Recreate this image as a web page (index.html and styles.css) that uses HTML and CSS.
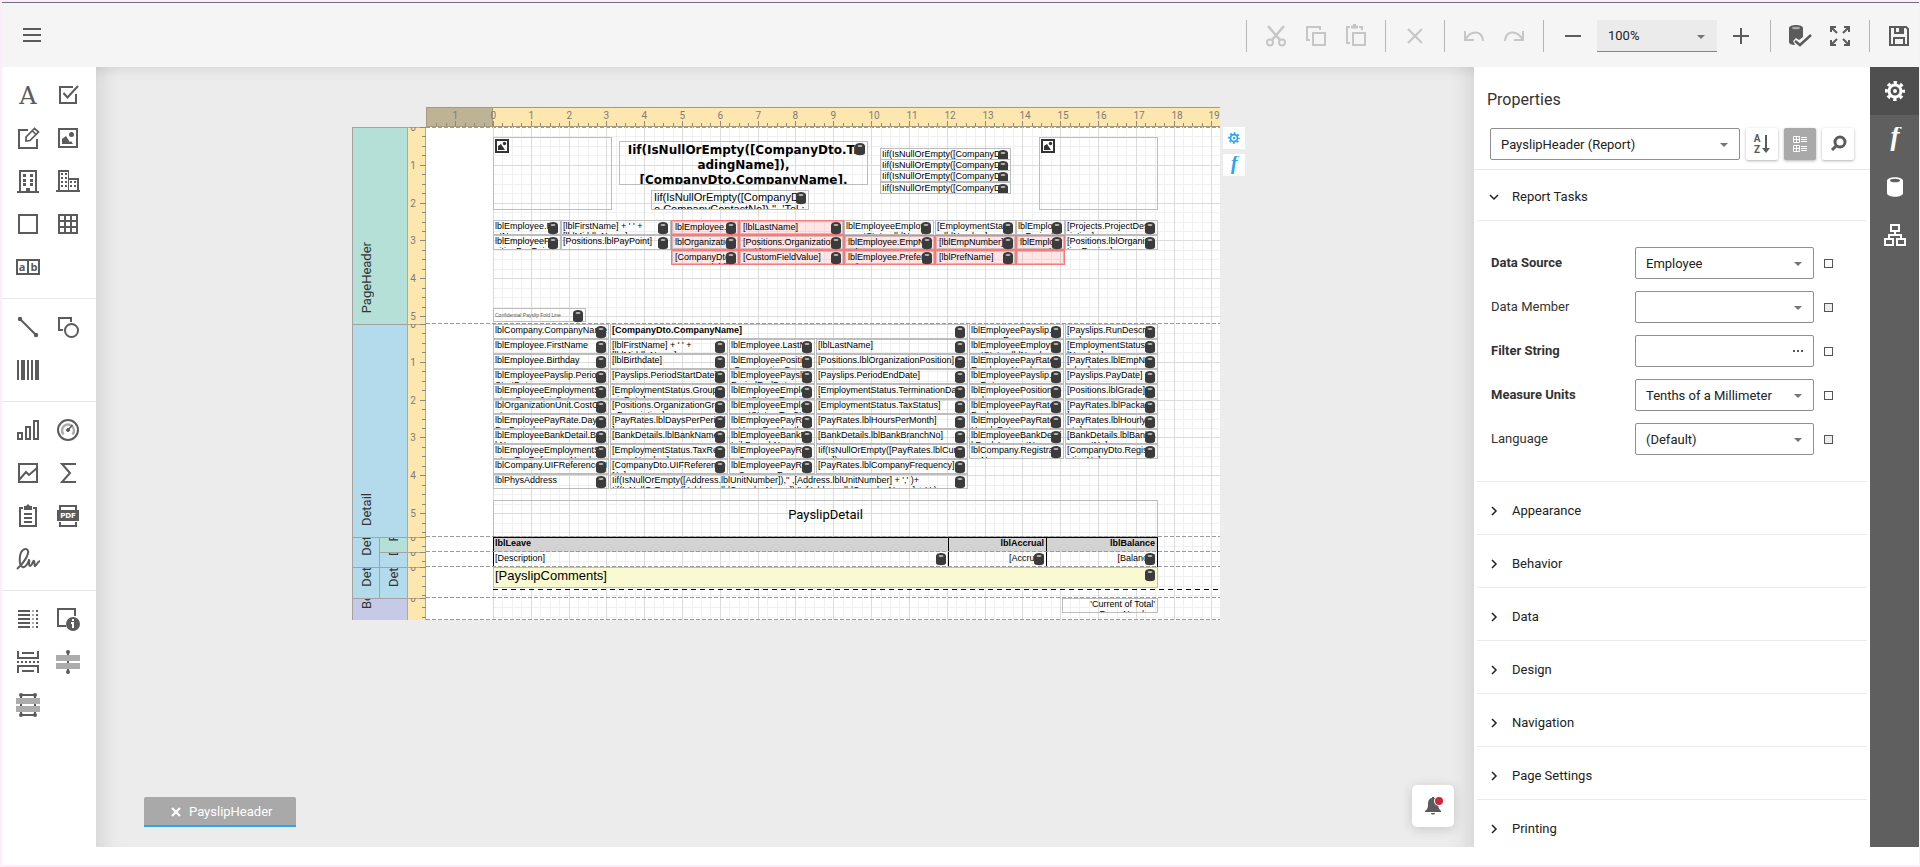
FILE: index.html
```html
<!DOCTYPE html>
<html lang="en">
<head>
<meta charset="utf-8">
<title>Report Designer</title>
<link rel="stylesheet" href="styles.css">
</head>
<body>
<svg class="sprite" aria-hidden="true">
  <symbol id="i-menu" viewBox="0 0 24 24"><path d="M3 5h18v2H3zM3 11h18v2H3zM3 17h18v2H3z" fill="currentColor"/></symbol>
  <symbol id="i-label" viewBox="0 0 24 24"><text x="12" y="21" text-anchor="middle" class="t-serif" fill="currentColor">A</text></symbol>
  <symbol id="i-check" viewBox="0 0 24 24" fill="none" stroke="currentColor" stroke-width="2"><path d="M17 4H4v16h16v-9M7.500 10l4 4.500L22 3"/></symbol>
  <symbol id="i-rich" viewBox="0 0 24 24" fill="none" stroke="currentColor" stroke-width="2"><path d="M12 4H3v18h18v-9"/><path d="M10 15v-4l8.500-8.500 4 3.500-8.500 8.500zM16 4.500l4 4" stroke-width="1.700"/></symbol>
  <symbol id="i-picture" viewBox="0 0 24 24"><path d="M3 3h18v18H3z" fill="none" stroke="currentColor" stroke-width="2"/><path d="M6 18v-5l4-3 5 8z" fill="currentColor"/><path d="M12 18l3-3 2 3z" fill="currentColor"/><circle cx="15.500" cy="8.500" r="2.500" fill="currentColor"/></symbol>
  <symbol id="i-picture-bold" viewBox="0 0 16 16"><path d="M2 2h12v12H2z" fill="#fff" stroke="currentColor" stroke-width="2"/><path d="M4 12V8l3-2 4 6z" fill="currentColor"/><circle cx="10.500" cy="5.500" r="1.700" fill="currentColor"/></symbol>
  <symbol id="i-panel" viewBox="0 0 24 24" fill="currentColor"><path d="M3 1h18v21h2v2H1v-2h2zM5 3v19h5v-3h4v3h5V3z" fill-rule="evenodd"/><path d="M7 5h3v3H7zM14 5h3v3h-3zM7 10h3v3H7zM14 10h3v3h-3zM7 14h3v3H7zM14 14h3v3h-3z"/></symbol>
  <symbol id="i-table-building" viewBox="0 0 24 24" fill="currentColor"><path d="M2 1h11v8h10v12h1v2H0v-2h2zM4 3v18h8V3zM13 11v10h8V11z" fill-rule="evenodd"/><path d="M5 4h2v2H5zM9 4h2v2H9zM5 8h2v2H5zM9 8h2v2H9zM5 12h2v2H5zM9 12h2v2H9zM5 16h2v2H5zM9 16h2v2H9zM14 12h2v2h-2zM18 12h2v2h-2zM14 16h2v2h-2zM18 16h2v2h-2z"/></symbol>
  <symbol id="i-square" viewBox="0 0 24 24"><path d="M3 3h18v18H3z" fill="none" stroke="currentColor" stroke-width="2"/></symbol>
  <symbol id="i-grid" viewBox="0 0 24 24"><path d="M3 3h18v18H3zM3 9h18M3 15h18M9 3v18M15 3v18" fill="none" stroke="currentColor" stroke-width="2"/></symbol>
  <symbol id="i-comb" viewBox="0 0 24 24"><path d="M1 5h22v14H1zM12 5v14" fill="none" stroke="currentColor" stroke-width="2"/><text x="6" y="16" text-anchor="middle" class="t-small" fill="currentColor">a</text><text x="18" y="16" text-anchor="middle" class="t-small" fill="currentColor">b</text></symbol>
  <symbol id="i-line" viewBox="0 0 24 24"><path d="M4 4l16 16" stroke="currentColor" stroke-width="2"/><circle cx="4" cy="4" r="2.200" fill="currentColor"/><circle cx="20" cy="20" r="2.200" fill="currentColor"/></symbol>
  <symbol id="i-shape" viewBox="0 0 24 24" fill="none" stroke="currentColor" stroke-width="2"><path d="M15 7V3H3v12h4"/><circle cx="15.500" cy="15.500" r="6.500"/></symbol>
  <symbol id="i-barcode" viewBox="0 0 24 24"><path d="M1 2h2v20H1zM5 2h4v20H5zM11 2h2v20h-2zM15 2h2v20h-2zM19 2h4v20h-4z" fill="currentColor"/></symbol>
  <symbol id="i-chart" viewBox="0 0 24 24"><path d="M2 15h4v6H2zM10 9h4v12h-4zM18 3h4v18h-4z" fill="none" stroke="currentColor" stroke-width="2"/></symbol>
  <symbol id="i-gauge" viewBox="0 0 24 24" fill="none" stroke="currentColor"><circle cx="12" cy="12" r="10" stroke-width="2"/><path d="M7.500 16.500a6 6 0 1 1 9 0" stroke-width="2.500" opacity=".5"/><path d="M12 12l4.500-5" stroke-width="1.500"/><circle cx="12" cy="12" r="1.500" fill="currentColor"/></symbol>
  <symbol id="i-spark" viewBox="0 0 24 24"><path d="M3 3h18v18H3zM3 19l7-8 3 3 8-7" fill="none" stroke="currentColor" stroke-width="2"/></symbol>
  <symbol id="i-sum" viewBox="0 0 24 24"><path d="M20 3H6l8 9-8 9h14" fill="none" stroke="currentColor" stroke-width="2"/></symbol>
  <symbol id="i-toc" viewBox="0 0 24 24"><path d="M7 4H4v18h16V4h-3" fill="none" stroke="currentColor" stroke-width="2"/><path d="M8 2h2l2-2 2 2h2v4H8zM8 9h8v2H8zM8 13h8v2H8zM8 17h8v2H8z" fill="currentColor"/></symbol>
  <symbol id="i-pdf" viewBox="0 0 24 24"><path d="M4 6V2h16v4M4 18v4h16v-4" fill="none" stroke="currentColor" stroke-width="2"/><path d="M1 6h22v11H1z" fill="currentColor"/><text x="12" y="14" text-anchor="middle" class="t-pdf" fill="#fff">PDF</text></symbol>
  <symbol id="i-sign" viewBox="0 0 24 24"><path d="M1 22C7 17 13 8 12 4c-1-4-7-2-8 5-1 8 1 12 4 11 3-1 4-4 5-7 1 0-1 6 1 6s3-6 4-5 0 5 1 5c2-1 2-4 5-5" fill="none" stroke="currentColor" stroke-width="2"/></symbol>
  <symbol id="i-break-h" viewBox="0 0 24 24"><path d="M2 3h12v2H2zM2 7h12v2H2zM2 11h12v2H2zM2 15h12v2H2zM2 19h12v2H2z" fill="currentColor"/><path d="M17 3v18" stroke="currentColor" stroke-width="2" stroke-dasharray="2 2" opacity=".5"/><path d="M21 3v18" stroke="currentColor" stroke-width="2" stroke-dasharray="2 2"/></symbol>
  <symbol id="i-info" viewBox="0 0 24 24"><path d="M19 9V2H2v17h8" fill="none" stroke="currentColor" stroke-width="2"/><circle cx="17" cy="17" r="7" fill="currentColor"/><path d="M16 12h2v2h-2zM15 15h3v6h-2v-4h-1z" fill="#fff"/></symbol>
  <symbol id="i-pagebreak" viewBox="0 0 24 24"><path d="M2 1v7h20V1M2 23v-7h20v7M6 3h12M6 21h12" fill="none" stroke="currentColor" stroke-width="2"/><path d="M1 12h22" stroke="currentColor" stroke-width="2" stroke-dasharray="2 2"/></symbol>
  <symbol id="i-crossline" viewBox="0 0 24 24"><path d="M12 2v20" stroke="currentColor" stroke-width="2"/><path d="M0 5h24v6H0zM0 13h24v6H0z" fill="#acacac"/><circle cx="12" cy="2" r="2" fill="currentColor"/><circle cx="12" cy="22" r="2" fill="currentColor"/></symbol>
  <symbol id="i-crossbox" viewBox="0 0 24 24"><path d="M5 2h14v20H5z" fill="none" stroke="currentColor" stroke-width="2"/><path d="M0 5h24v6H0zM0 13h24v6H0z" fill="#acacac"/><g fill="currentColor"><circle cx="5" cy="2" r="2"/><circle cx="19" cy="2" r="2"/><circle cx="5" cy="22" r="2"/><circle cx="19" cy="22" r="2"/></g></symbol>
  <symbol id="i-cut" viewBox="0 0 24 24" fill="none" stroke="currentColor" stroke-width="2"><path d="M4 2l12 14M20 2L8 16" stroke-width="2.500"/><circle cx="6" cy="18.500" r="3"/><circle cx="18" cy="18.500" r="3"/></symbol>
  <symbol id="i-copy" viewBox="0 0 24 24" fill="none" stroke="currentColor" stroke-width="2"><path d="M16 6V3H3v13h3M9 9h12v12H9z"/></symbol>
  <symbol id="i-paste" viewBox="0 0 24 24" fill="none" stroke="currentColor" stroke-width="2"><path d="M6 3H3v16h3M15 3h3v3M9 9h12v12H9z"/><path d="M7 3h7M9 1h3" stroke-width="3"/></symbol>
  <symbol id="i-x" viewBox="0 0 24 24"><path d="M5 5l14 14M19 5L5 19" fill="none" stroke="currentColor" stroke-width="2"/></symbol>
  <symbol id="i-close" viewBox="0 0 14 14"><path d="M3 3l8 8M11 3l-8 8" fill="none" stroke="currentColor" stroke-width="2"/></symbol>
  <symbol id="i-undo" viewBox="0 0 24 24"><path d="M3 7v9h9M3.500 15.500C9 6 20 6 21 17" fill="none" stroke="currentColor" stroke-width="2"/></symbol>
  <symbol id="i-redo" viewBox="0 0 24 24"><path d="M21 7v9h-9M20.500 15.500C15 6 4 6 3 17" fill="none" stroke="currentColor" stroke-width="2"/></symbol>
  <symbol id="i-minus" viewBox="0 0 24 24"><path d="M4 11h16v2H4z" fill="currentColor"/></symbol>
  <symbol id="i-plus" viewBox="0 0 24 24"><path d="M4 11h7V4h2v7h7v2h-7v7h-2v-7H4z" fill="currentColor"/></symbol>
  <symbol id="i-validate" viewBox="0 0 24 24"><path d="M1 4c0-4 14-4 14 0v9l-4 3-3-2-3 3 2 4c-3 0-6-1-6-3z" fill="currentColor"/><ellipse cx="8" cy="4" rx="4" ry="1.300" fill="#aaa"/><path d="M7 17l5 4L23 11" fill="none" stroke="currentColor" stroke-width="2.500"/></symbol>
  <symbol id="i-full" viewBox="0 0 24 24" fill="none" stroke="currentColor" stroke-width="2"><path d="M3 8V3h5M16 3h5v5M21 16v5h-5M8 21H3v-5M3 3l6 6M21 3l-6 6M21 21l-6-6M3 21l6-6"/></symbol>
  <symbol id="i-save" viewBox="0 0 24 24" fill="none" stroke="currentColor" stroke-width="2"><path d="M3 3h16l2 2v16H3zM7 21v-7h10v7M8 3v6h8V3"/><path d="M12 3h3v5h-3z" fill="currentColor" stroke="none"/></symbol>
  <symbol id="i-gear" viewBox="0 0 24 24"><circle cx="12" cy="12" r="8.500" fill="none" stroke="currentColor" stroke-width="3" stroke-dasharray="3.400 3.276" stroke-dashoffset="1.700"/><circle cx="12" cy="12" r="6" fill="none" stroke="currentColor" stroke-width="3"/><circle cx="12" cy="12" r="2" fill="currentColor"/></symbol>
  <symbol id="i-f" viewBox="0 0 24 24"><text x="12" y="18" text-anchor="middle" class="t-f" fill="currentColor">f</text></symbol>
  <symbol id="i-db" viewBox="0 0 24 24"><path d="M4 6c0-5 16-5 16 0v12c0 5-16 5-16 0z" fill="currentColor"/><ellipse cx="12" cy="5.500" rx="5" ry="1.800" fill="#5f5f5f"/></symbol>
  <symbol id="i-tree" viewBox="0 0 24 24" fill="none" stroke="currentColor" stroke-width="2"><path d="M8 2h8v6H8zM2 16h8v6H2zM14 16h8v6h-8zM12 8v4M6 16v-4h12v4"/></symbol>
  <symbol id="i-sort" viewBox="0 0 24 24"><text x="7" y="10" text-anchor="middle" class="t-sort" fill="currentColor">A</text><text x="7" y="21" text-anchor="middle" class="t-sort" fill="currentColor">Z</text><path d="M16 3v16" stroke="currentColor" stroke-width="2"/><path d="M12 16h8l-4 5z" fill="currentColor"/></symbol>
  <symbol id="i-cat" viewBox="0 0 24 24" fill="none" stroke="currentColor"><path d="M5.500 4.500h6v6h-6zM5.500 13.500h6v6h-6zM8.500 5v5M6 7.500h5M8.500 14v5M6 16.500h5M13 5.500h6M13 7.500h6M13 9.500h6M13 14.500h6M13 16.500h6M13 18.500h6"/></symbol>
  <symbol id="i-search" viewBox="0 0 24 24" fill="none" stroke="currentColor"><circle cx="14" cy="10" r="5" stroke-width="3"/><path d="M10.500 13.500L6 18" stroke-width="3"/></symbol>
  <symbol id="i-right" viewBox="0 0 12 12"><path d="M4 2l4 4-4 4" fill="none" stroke="currentColor" stroke-width="1.500"/></symbol>
  <symbol id="i-down" viewBox="0 0 12 12"><path d="M2 4l4 4 4-4" fill="none" stroke="currentColor" stroke-width="1.500"/></symbol>
  <symbol id="i-bell" viewBox="0 0 24 24"><path d="M4 17c3-2 3-4 3-8 0-3 2-5 4-5V3h2v1c3 0 4 3 4 6 0 3 1 5 3 7v1H4zM10 19h4c0 2-4 2-4 0" fill="currentColor"/><circle cx="18" cy="7" r="5" fill="#fff"/><circle cx="18" cy="7" r="4" fill="#d0273e"/></symbol>
</svg>

<div class="designer">
  <header class="toolbar">
    <button class="tool menu" aria-label="Menu"><svg><use href="#i-menu"/></svg></button>
    <div class="actions">
      <span class="sep"></span>
      <button class="tool" disabled aria-label="Cut"><svg><use href="#i-cut"/></svg></button>
      <button class="tool" disabled aria-label="Copy"><svg><use href="#i-copy"/></svg></button>
      <button class="tool" disabled aria-label="Paste"><svg><use href="#i-paste"/></svg></button>
      <span class="sep"></span>
      <button class="tool" disabled aria-label="Delete"><svg><use href="#i-x"/></svg></button>
      <span class="sep"></span>
      <button class="tool" disabled aria-label="Undo"><svg><use href="#i-undo"/></svg></button>
      <button class="tool" disabled aria-label="Redo"><svg><use href="#i-redo"/></svg></button>
      <span class="sep"></span>
      <button class="tool" aria-label="Zoom out"><svg><use href="#i-minus"/></svg></button>
      <div class="pick zoom"><select aria-label="Zoom"><option>100%</option></select></div>
      <button class="tool" aria-label="Zoom in"><svg><use href="#i-plus"/></svg></button>
      <span class="sep"></span>
      <button class="tool" aria-label="Validate bindings"><svg><use href="#i-validate"/></svg></button>
      <button class="tool" aria-label="Full screen"><svg><use href="#i-full"/></svg></button>
      <span class="sep"></span>
      <button class="tool" aria-label="Save"><svg><use href="#i-save"/></svg></button>
    </div>
  </header>

  <div class="main">
    <nav class="toolbox" aria-label="Toolbox">
      <div class="tools">
        <button aria-label="Label"><svg><use href="#i-label"/></svg></button>
        <button aria-label="Check box"><svg><use href="#i-check"/></svg></button>
        <button aria-label="Rich text"><svg><use href="#i-rich"/></svg></button>
        <button aria-label="Picture box"><svg><use href="#i-picture"/></svg></button>
        <button aria-label="Company"><svg><use href="#i-panel"/></svg></button>
        <button aria-label="Organization"><svg><use href="#i-table-building"/></svg></button>
        <button aria-label="Panel"><svg><use href="#i-square"/></svg></button>
        <button aria-label="Table"><svg><use href="#i-grid"/></svg></button>
        <button aria-label="Character comb"><svg><use href="#i-comb"/></svg></button>
      </div>
      <div class="tools">
        <button aria-label="Line"><svg><use href="#i-line"/></svg></button>
        <button aria-label="Shape"><svg><use href="#i-shape"/></svg></button>
        <button aria-label="Barcode"><svg><use href="#i-barcode"/></svg></button>
      </div>
      <div class="tools">
        <button aria-label="Chart"><svg><use href="#i-chart"/></svg></button>
        <button aria-label="Gauge"><svg><use href="#i-gauge"/></svg></button>
        <button aria-label="Sparkline"><svg><use href="#i-spark"/></svg></button>
        <button aria-label="Pivot grid"><svg><use href="#i-sum"/></svg></button>
        <button aria-label="Subreport"><svg><use href="#i-toc"/></svg></button>
        <button aria-label="PDF content"><svg><use href="#i-pdf"/></svg></button>
        <button aria-label="Signature"><svg><use href="#i-sign"/></svg></button>
      </div>
      <div class="tools">
        <button aria-label="Table of contents"><svg><use href="#i-break-h"/></svg></button>
        <button aria-label="Page info"><svg><use href="#i-info"/></svg></button>
        <button aria-label="Page break"><svg><use href="#i-pagebreak"/></svg></button>
        <button aria-label="Cross-band line"><svg><use href="#i-crossline"/></svg></button>
        <button aria-label="Cross-band box"><svg><use href="#i-crossbox"/></svg></button>
      </div>
    </nav>

    <main class="workspace">
      <div class="stage">
        <div class="report">
          <div class="top-ruler" id="top-ruler"></div>
          <div class="report-body">
            <div class="labels" id="labels"></div>
            <div class="bands" id="bands"></div>
          </div>
        </div>
        <div class="smart">
          <button aria-label="Report properties"><svg><use href="#i-gear"/></svg></button>
          <button aria-label="Report expressions"><svg><use href="#i-f"/></svg></button>
        </div>
      </div>
      <div class="footer">
        <button class="tab"><svg><use href="#i-close"/></svg>PayslipHeader</button>
        <button class="bell" aria-label="Notifications"><svg><use href="#i-bell"/></svg></button>
      </div>
    </main>

    <aside class="properties">
      <h2>Properties</h2>
      <div class="chooser">
        <div class="pick"><select aria-label="Component"><option>PayslipHeader (Report)</option></select></div>
        <button aria-label="Sort alphabetically"><svg><use href="#i-sort"/></svg></button>
        <button class="on" aria-label="Group by category"><svg><use href="#i-cat"/></svg></button>
        <button aria-label="Search"><svg><use href="#i-search"/></svg></button>
      </div>
      <div class="sections">
        <button class="section"><svg><use href="#i-down"/></svg>Report Tasks</button>
        <div class="form">
          <label class="set" for="p1">Data Source</label>
          <div class="pick"><select id="p1"><option>Employee</option></select></div>
          <button class="mark" aria-label="Data Source options"></button>
          <label for="p2">Data Member</label>
          <div class="pick"><select id="p2"><option></option></select></div>
          <button class="mark off" aria-label="Data Member options"></button>
          <label class="set" for="p3">Filter String</label>
          <div class="entry"><input id="p3" type="text"><button aria-label="Edit filter"><i></i><i></i><i></i></button></div>
          <button class="mark" aria-label="Filter String options"></button>
          <label class="set" for="p4">Measure Units</label>
          <div class="pick"><select id="p4"><option>Tenths of a Millimeter</option></select></div>
          <button class="mark" aria-label="Measure Units options"></button>
          <label for="p5">Language</label>
          <div class="pick"><select id="p5"><option>(Default)</option></select></div>
          <button class="mark off" aria-label="Language options"></button>
        </div>
        <button class="section"><svg><use href="#i-right"/></svg>Appearance</button>
        <button class="section"><svg><use href="#i-right"/></svg>Behavior</button>
        <button class="section"><svg><use href="#i-right"/></svg>Data</button>
        <button class="section"><svg><use href="#i-right"/></svg>Design</button>
        <button class="section"><svg><use href="#i-right"/></svg>Navigation</button>
        <button class="section"><svg><use href="#i-right"/></svg>Page Settings</button>
        <button class="section"><svg><use href="#i-right"/></svg>Printing</button>
      </div>
    </aside>

    <nav class="side" aria-label="Panels">
      <button class="on" aria-label="Properties"><svg><use href="#i-gear"/></svg></button>
      <button aria-label="Expressions"><svg><use href="#i-f"/></svg></button>
      <button aria-label="Fields"><svg><use href="#i-db"/></svg></button>
      <button aria-label="Report explorer"><svg><use href="#i-tree"/></svg></button>
    </nav>
  </div>
</div>
<script src="report.js"></script>
</body>
</html>
```

FILE: styles.css
```css
* { box-sizing: border-box; }
body { margin: 0; font: 13px/16px Roboto, sans-serif; color: #333; }
button, select, input { font: inherit; color: inherit; margin: 0; padding: 0; border: 0; background: none; border-radius: 0; }
svg { display: block; width: 24px; height: 24px; flex: none; }
.sprite { display: none; }
.t-serif { font: 24px "DejaVu Serif", serif; }
.t-small { font: bold 11px "Open Sans", sans-serif; }
.t-pdf { font: bold 7px "DejaVu Sans", sans-serif; }
.t-f { font: italic bold 27px "Liberation Serif", serif; }
.t-sort { font: bold 10px Roboto, sans-serif; }

.designer { display: flex; flex-direction: column; height: 100vh; border: solid #fdecfa; border-width: 2px 1px 2px 2px; background: #fff; }
.toolbar { display: flex; justify-content: space-between; align-items: center; height: 65px; flex: none; border-top: 1px solid #6f7285; background: #f5f5f5; }
.actions { display: flex; align-items: center; padding-top: 2px; }
.tool { display: grid; place-items: center; width: 40px; height: 40px; color: #5b5b5b; }
.tool:disabled { color: #c6c6c6; }
.menu { margin-left: 10px; }
.sep { width: 1px; height: 32px; margin: 0 9px; background: #b5b5b5; }

.pick { position: relative; flex: 1; }
.pick::after { content: ""; position: absolute; right: 12px; top: 15px; border: solid transparent; border-width: 4px 4px 0; border-top-color: #757575; }
.pick select, .entry { width: 100%; height: 32px; appearance: none; border: 1px solid #8f8f8f; border-radius: 2px; padding: 1px 10px 0; background: #fff; }
.pick select { display: block; color: #222; }
.zoom { flex: none; width: 120px; margin: 0 4px; }
.zoom select { border: 0; border-bottom: 1px solid #858585; border-radius: 0; background: #ebebeb; padding: 0 11px; }

.main { display: flex; flex: 1; min-height: 0; padding-bottom: 18px; }
.toolbox { width: 94px; flex: none; color: #5b5b5b; }
.tools { display: grid; grid-template-columns: 40px 40px; grid-auto-rows: 43px; padding: 6px 6px 10px; border-bottom: 1px solid #e8e8e8; }
.tools:last-child { border-bottom: 0; }
.tools button { display: grid; place-items: center; }

.workspace { display: flex; flex-direction: column; justify-content: space-between; flex: 1; min-width: 0; padding: 40px 20px 20px 48px; background: #ececec; box-shadow: inset 0 14px 14px -12px rgba(0,0,0,.1), inset 24px 0 20px -18px rgba(0,0,0,.1), inset -24px 0 20px -18px rgba(0,0,0,.1); }
.stage { display: flex; align-items: flex-start; gap: 3px; padding-left: 208px; }
.report { color: #7c7c7c; }
.top-ruler { margin-left: 74px; }
.ruler-svg, .grid-svg { width: auto; height: auto; }
.ruler-svg text { font: 10px Roboto, sans-serif; fill: #7c7c7c; }
.report-body { display: flex; }
.labels { width: 55px; border-left: 1px solid #a3a3a3; }
.label-row { display: flex; }
.label { display: flex; flex-direction: column; justify-content: flex-end; align-items: flex-start; flex: 1; min-width: 0; padding: 0 0 11px 6px; overflow: hidden; border-top: 1px solid #a3a3a3; color: #333; }
.label span { writing-mode: vertical-rl; transform: rotate(180deg); flex: none; white-space: nowrap; }
.nested { display: flex; flex-direction: column; flex: none; width: 28px; border-left: 1px solid #a3a3a3; }
.nested .label { flex: none; }
.green { background: #b5e0d8; }
.blue { background: #b4dbec; }
.violet { background: #c6cae6; }
.band { display: flex; }
.surface { position: relative; width: 794px; padding-left: 67px; background: #fff; }
.surface::after, .band:first-child .surface::before { content: ""; position: absolute; left: 0; right: 0; bottom: 0; height: 1px; background: repeating-linear-gradient(90deg, #9a9a9a 0 4px, transparent 4px 6px); }
.band:first-child .surface::before { top: 0; bottom: auto; }
.content { position: relative; height: 100%; }
.content .grid-svg { position: absolute; }

.field { position: absolute; border: 1px solid #bdbdbd; color: #000; font: 9px/10px "Liberation Sans", sans-serif; }
.field .text { height: 100%; overflow: hidden; padding: 0 1px; overflow-wrap: anywhere; }
.field .db { position: absolute; top: 1px; right: 1px; width: 11px; height: 13px; }
.field .pic { position: absolute; top: 0; left: 0; width: 16px; height: 16px; color: #333; }
.clip { overflow: hidden; }
.error { border-color: #f47c7c; background: rgba(255,60,60,.13); box-shadow: inset 0 0 0 1px #d8b8b8; }
.error .text { padding: 1px 3px 0; }
.title .text { font: bold 12px/15px "DejaVu Sans", sans-serif; text-align: center; padding: 1px 6px 0; }
.contact .text { font-size: 11px; line-height: 12px; padding: 0 2px; }
.tiny .text { font-size: 5px; line-height: 13px; color: #555; }
.bold .text { font-weight: bold; }
.right .text { text-align: right; padding-right: 2px; }
.page .text { padding-left: 16px; }
.sub .text { font: 13px/27px Roboto, sans-serif; text-align: center; }
.head { background: #d3d3d3; border-color: #000; border-bottom: 0; }
.cell { border-color: #000; border-top: 0; border-bottom: 0; }
.cell .text { padding-top: 1px; }
.comments { background: #fafad2; }
.comments .text { font-size: 13px; line-height: 16px; }
.cross { position: absolute; left: 0; right: 0; height: 1px; background: repeating-linear-gradient(90deg, #000 0 5px, #fff 5px 9px); }

.smart { display: flex; flex-direction: column; gap: 5px; padding-top: 20px; }
.smart button { display: grid; place-items: center; width: 22px; height: 22px; background: #fff; color: #2ba5f0; }
.smart svg { width: 14px; height: 14px; }
.smart button + button svg { width: 18px; height: 18px; }

.footer { display: flex; justify-content: space-between; align-items: flex-end; }
.tab { display: flex; align-items: center; gap: 6px; height: 30px; width: 152px; padding: 1px 0 0 25px; background: #a9a9a9; border-bottom: 2px solid #2ba5f0; border-radius: 2px 2px 0 0; color: #fff; }
.tab svg { width: 14px; height: 14px; }
.bell { display: grid; place-items: center; width: 42px; height: 42px; border-radius: 5px; background: #fff; color: #5b5b5b; box-shadow: 0 2px 12px rgba(0,0,0,.16); }

.properties { width: 396px; flex: none; overflow: hidden; }
.properties h2 { margin: 0; padding: 23px 13px 18px; font-size: 16px; line-height: 20px; font-weight: 400; }
.chooser { display: flex; gap: 6px; padding: 0 16px 9px; border-bottom: 1px solid #e8e8e8; }
.chooser button { display: grid; place-items: center; width: 32px; height: 32px; border-radius: 2px; color: #5b5b5b; box-shadow: 0 1px 3px rgba(0,0,0,.3); }
.chooser .on { background: #a9a9a9; color: #fff; }
.sections { padding: 0 3px; }
.section { display: flex; align-items: center; gap: 12px; width: 100%; height: 53px; padding: 5px 11px 0; color: #222; border-bottom: 1px solid #ebebeb; }
.section:first-child { height: 51px; padding-top: 3px; }
.section svg { width: 12px; height: 12px; }
.form { display: grid; grid-template-columns: 134px 179px 9px; column-gap: 10px; row-gap: 12px; align-items: center; padding: 26px 14px; border-bottom: 1px solid #ebebeb; }
.set { font-weight: bold; }
.entry { display: flex; padding: 0 10px 0 0; }
.entry input { flex: 1; min-width: 0; outline: 0; padding-left: 10px; }
.entry button { display: flex; align-items: center; gap: 2px; }
.entry i { width: 2px; height: 2px; background: #555; }
.mark { width: 9px; height: 9px; border: 1px solid #555; }
.off { background: #ececec; }

.side { width: 49px; flex: none; background: #5f5f5f; color: #fff; }
.side button { display: grid; place-items: center; width: 100%; height: 48px; }
.side .on { background: #4f4f4f; }
```

FILE: report.js
```js
// One centimetre of an A4 page drawn 794 pixels wide.
const CM = 794 / 21;
const STEP = CM / 4;
const MARGIN = 67;
const PAGE = 794;

const svg = (w, h, cls, inner) =>
  `<svg class="${cls}" width="${w}" height="${h}" viewBox="0 0 ${w} ${h}">${inner}</svg>`;

function topRuler() {
  let s = `<rect width="${PAGE}" height="20" fill="#fde7ae"/><rect width="${MARGIN}" height="20" fill="#beb395"/>`;
  s += `<path d="M0 .5H${PAGE}M0 19.500H${PAGE}M.5 0V20M${MARGIN - 0.5} 0V20" stroke="#a59a7e"/>`;
  for (let i = -6; MARGIN + i * STEP < PAGE; i++) {
    const x = Math.round(MARGIN + i * STEP) + 0.5;
    s += `<path d="M${x} ${i % 4 ? 16 : 14}V19" stroke="#8a8a80"/>`;
    if (i % 4 === 0) s += `<text x="${x - 3}" y="12">${Math.abs(i / 4)}</text>`;
  }
  return svg(PAGE, 20, "ruler-svg", s);
}

function sideRuler(h) {
  let s = `<rect width="19" height="${h}" fill="#fde7ae"/><path d="M0 .5H19M.5 0V${h}M18.500 0V${h}" stroke="#b5a98a" fill="none"/>`;
  for (let i = 0; i * STEP < h; i++) {
    const y = Math.round(i * STEP) + 0.5;
    s += `<path d="M${i % 4 ? 15 : 13} ${y}H19" stroke="#8a8a80"/>`;
    if (i % 4 === 0) s += `<text x="6" y="${y + 3}" text-anchor="middle">${i / 4}</text>`;
  }
  return svg(19, h, "ruler-svg", s);
}

function grid(h) {
  const w = PAGE - MARGIN;
  let minor = "", major = "";
  for (let i = 0; i * STEP < w; i++) {
    const p = `M${Math.round(i * STEP) + 0.5} 0V${h}`;
    if (i % 4) minor += p; else major += p;
  }
  for (let i = 1; i * STEP < h; i++) {
    const p = `M0 ${Math.round(i * STEP) + 0.5}H${w}`;
    if (i % 4) minor += p; else major += p;
  }
  return svg(w, h, "grid-svg", `<path d="${minor}" stroke="#f0f0f0"/><path d="${major}" stroke="#dcdcdc"/>`);
}

const DB = '<svg class="db" viewBox="0 0 11 13"><path d="M0 3C0-1 10-1 10 3V10C10 13 0 13 0 10Z" fill="#3b3b3b"/><ellipse cx="5" cy="3" rx="2.500" ry="1" fill="#bbb"/></svg>';
const PIC = '<svg class="pic"><use href="#i-picture-bold"/></svg>';

// x, y, width, height, text, class names, icon ("db" unless given)
const header = [
  [0, 10, 119, 73, "", "", "pic"],
  [546, 10, 119, 73, "", "", "pic"],
  [126, 14, 249, 44, "Iif(IsNullOrEmpty([CompanyDto.TradingName]), [CompanyDto.CompanyName], [CompanyDto.TradingName])", "title"],
  [158, 63, 158, 20, "Iif(IsNullOrEmpty([CompanyDto.CompanyContactNo]),'', 'Tel : '+ [CompanyDto.CompanyContactNo])", "contact"],
  ...[21, 32, 43, 55].map(y => [387, y, 131, 12, "Iif(IsNullOrEmpty([CompanyDto.Address]),'')", "clip"]),
  [0, 93, 68, 15, "lblEmployee.FirstName", ""],
  [68, 93, 110, 15, "[lblFirstName] + ' ' + [lblMiddleName]", ""],
  [178, 93, 68, 15, "lblEmployee.LastName", "error"],
  [246, 93, 105, 15, "[lblLastName]", "error"],
  [351, 93, 90, 15, "lblEmployeeEmploymentStatus.lblNumber", ""],
  [442, 93, 81, 15, "[EmploymentStatus.lblNumber]", ""],
  [523, 93, 49, 15, "lblEmployee.Project", ""],
  [572, 93, 93, 15, "[Projects.ProjectDescription]", ""],
  [0, 108, 68, 15, "lblEmployeePositionPayPoint", ""],
  [68, 108, 110, 15, "[Positions.lblPayPoint]", ""],
  [178, 108, 68, 15, "lblOrganizationUnit", "error"],
  [246, 108, 105, 15, "[Positions.OrganizationUnit]", "error"],
  [351, 108, 91, 15, "lblEmployee.EmpNumber", "error"],
  [442, 108, 81, 15, "[lblEmpNumber]", "error"],
  [523, 108, 49, 15, "lblEmployee.Region", "error"],
  [572, 108, 93, 15, "[Positions.lblOrganizationRegion]", ""],
  [178, 123, 68, 15, "[CompanyDto.CustomField]", "error"],
  [246, 123, 105, 15, "[CustomFieldValue]", "error"],
  [351, 123, 91, 15, "lblEmployee.PreferredName", "error"],
  [442, 123, 81, 15, "[lblPrefName]", "error"],
  [523, 123, 49, 15, "", "error", "none"],
  [0, 181, 93, 14, "Confidential Payslip Fold Line", "tiny"]
];

const rows = [
  ["lblCompany.CompanyName", "[CompanyDto.CompanyName]", null, null, "lblEmployeePayslip.CompanyRun", "[Payslips.RunDescription]"],
  ["lblEmployee.FirstName", "[lblFirstName] + ' ' + [lblMiddleName]", "lblEmployee.LastName", "[lblLastName]", "lblEmployeeEmploymentStatus.lblNumber", "[EmploymentStatus.lblNumber]"],
  ["lblEmployee.Birthday", "[lblBirthdate]", "lblEmployeePosition.OrganizationPosition", "[Positions.lblOrganizationPosition]", "lblEmployeePayRate.EmployeeNumber", "[PayRates.lblEmpNumber]"],
  ["lblEmployeePayslip.PeriodStartDate", "[Payslips.PeriodStartDate]", "lblEmployeePayslip.PeriodEndDate", "[Payslips.PeriodEndDate]", "lblEmployeePayslip.PayDate", "[Payslips.PayDate]"],
  ["lblEmployeeEmploymentStatus.GroupJoinDate", "[EmploymentStatus.GroupJoinDate]", "lblEmployeeEmploymentStatus.Termination", "[EmploymentStatus.TerminationDate]", "lblEmployeePosition.Grade", "[Positions.lblGrade]"],
  ["lblOrganizationUnit.CostCentre", "[Positions.OrganizationGroupDescription]", "lblEmployeeEmploymentStatus.TaxStatus", "[EmploymentStatus.TaxStatus]", "lblEmployeePayRate.Package", "[PayRates.lblPackage]"],
  ["lblEmployeePayRate.DaysPerPeriod", "[PayRates.lblDaysPerPeriod]", "lblEmployeePayRate.HoursPerMonth", "[PayRates.lblHoursPerMonth]", "lblEmployeePayRate.HourlyRate", "[PayRates.lblHourlyRate]"],
  ["lblEmployeeBankDetail.BankName", "[BankDetails.lblBankName]", "lblEmployeeBankDetail.BranchNo", "[BankDetails.lblBankBranchNo]", "lblEmployeeBankDetail.BankAccountNo", "[BankDetails.lblBankAccountNo]"],
  ["lblEmployeeEmploymentStatus.TaxReferenceNumber", "[EmploymentStatus.TaxReferenceNumber]", "lblEmployeePayRate.Currency", "Iif(IsNullOrEmpty([PayRates.lblCurrency]), [PayRates.lblCompanyCurrency])", "lblCompany.RegistrationNo", "[CompanyDto.RegistrationNo]"],
  ["lblCompany.UIFReferenceNo", "[CompanyDto.UIFReferenceNo]", "lblEmployeePayRate.CompanyFrequency", "[PayRates.lblCompanyFrequency]", null, null],
  ["lblPhysAddress", "Iif(IsNullOrEmpty([Address.lblUnitNumber]),'' ,[Address.lblUnitNumber] + ',' )+ Iif(IsNullOrEmpty([Address.lblComplexName]),'', [Address.lblComplexName] + ',' )", null, null, null, null]
];
const columns = [[0, 116], [117, 118], [236, 86], [323, 152], [476, 95], [572, 93]];

const detail = [];
rows.forEach((row, r) => {
  row.forEach((text, c) => {
    if (text === null) return;
    const [x, w] = columns[c];
    const wide = c === 1 && row[2] === null;
    detail.push([x, r * 15, wide ? 358 : w, 15, text, wide && r === 0 ? "bold" : ""]);
  });
});
detail.push([0, 176, 665, 37, "PayslipDetail", "sub", "none"]);

const leaveHead = [
  [0, 0, 456, 15, "lblLeave", "head bold", "none"],
  [455, 0, 99, 15, "lblAccrual", "head bold right", "none"],
  [553, 0, 112, 15, "lblBalance", "head bold right", "none"]
];
const leaveRow = [
  [0, 0, 456, 15, "[Description]", "cell"],
  [455, 0, 99, 15, "[Accrual]", "cell right"],
  [553, 0, 112, 15, "[Balance]", "cell right"]
];
const comments = [[0, 0, 665, 21, "[PayslipComments]", "comments"]];
const footer = [[569, 0, 96, 15, "'Current of Total' Page Number", "right page", "none"]];

const bands = [
  { h: 197, fields: header },
  { h: 213, fields: detail },
  { h: 15, fields: leaveHead },
  { h: 15, fields: leaveRow },
  { h: 31, fields: comments, cross: 22 },
  { h: 22, fields: footer }
];

const labels = [
  { h: 197, name: "PageHeader", color: "green" },
  { h: 213, name: "Detail", color: "blue" },
  { h: 30, name: "DetailReport", color: "blue", nested: [[15, "PayslipHeader", "green"], [15, "Detail", "blue"]] },
  { h: 31, name: "DetailReport", color: "blue", nested: [[31, "Detail", "blue"]] },
  { h: 22, name: "BottomMargin", color: "violet" }
];

const field = ([x, y, w, h, text, cls, icon = "db"]) =>
  `<div class="field ${cls}" style="left:${x}px;top:${y}px;width:${w}px;height:${h}px">` +
  `<div class="text">${text}</div>${icon === "db" ? DB : icon === "pic" ? PIC : ""}</div>`;

document.getElementById("top-ruler").innerHTML = topRuler();

document.getElementById("bands").innerHTML = bands.map(b =>
  `<div class="band" style="height:${b.h}px">${sideRuler(b.h)}<div class="surface"><div class="content">` +
  grid(b.h) + b.fields.map(field).join("") +
  (b.cross ? `<div class="cross" style="top:${b.cross}px"></div>` : "") +
  "</div></div></div>").join("");

document.getElementById("labels").innerHTML = labels.map(l =>
  `<div class="label-row" style="height:${l.h}px"><div class="label ${l.color}"><span>${l.name}</span></div>` +
  (l.nested ? `<div class="nested">${l.nested.map(([h, n, c]) =>
    `<div class="label ${c}" style="height:${h}px"><span>${n}</span></div>`).join("")}</div>` : "") +
  "</div>").join("");
```
